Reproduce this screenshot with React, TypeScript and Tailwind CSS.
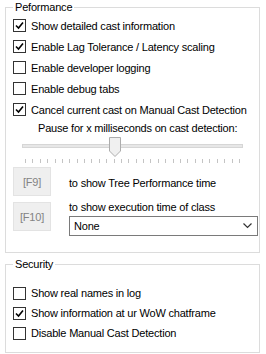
import React from 'react';

const Check = ({ checked }: { checked?: boolean }) => (
  <span className="w-[13px] h-[13px] border border-[#333333] bg-white flex items-center justify-center shrink-0">
    {checked && (
      <svg width="9" height="9" viewBox="0 0 9 9">
        <path d="M1 4.5 L3.5 7 L8 1.5" fill="none" stroke="#000" strokeWidth="1.6" />
      </svg>
    )}
  </span>
);

const Row = ({ label, checked }: { label: string; checked?: boolean }) => (
  <div className="h-[21px] flex items-center gap-[5px] pl-[7px]">
    <Check checked={checked} />
    <span>{label}</span>
  </div>
);

const SecRow = ({ label, checked }: { label: string; checked?: boolean }) => (
  <div className="h-[20px] flex items-center gap-[5px] pl-[7px]">
    <Check checked={checked} />
    <span>{label}</span>
  </div>
);

const KeyButton = ({ label }: { label: string }) => (
  <div className="w-[38px] h-[29px] bg-[#efefef] border border-[#e3e3e3] text-[#838383] flex items-center justify-center">
    {label}
  </div>
);

export default function App() {
  const ticks = Array.from({ length: 30 });
  return (
    <div className="w-[266px] h-[354px] bg-white text-black text-[11px] leading-[14px] tracking-[-0.2px] font-['Liberation_Sans',sans-serif] pt-0 px-[5px] pr-[6px]">
      <fieldset className="border border-[#dcdcdc] h-[253px] px-0">
        <legend className="ml-[7px] px-[2px]">Peformance</legend>
        <div className="pt-[1px]">
          <Row label="Show detailed cast information" checked />
          <Row label="Enable Lag Tolerance / Latency scaling" checked />
          <Row label="Enable developer logging" />
          <Row label="Enable debug tabs" />
          <Row label="Cancel current cast on Manual Cast Detection" checked />
          <div className="h-[16px] flex items-center pl-[32px]">Pause for x milliseconds on cast detection:</div>
          <div className="relative h-[22px] mx-[16px] mt-[1px]">
            <div className="absolute left-0 right-0 top-[7px] h-[4px] bg-[#e7e7e7] border border-[#d6d6d6]" />
            <svg className="absolute left-[87px] top-0" width="12" height="20" viewBox="0 0 12 20">
              <path d="M0.5 0.5 H11.5 V14 L6 19.5 L0.5 14 Z" fill="#f0f0f0" stroke="#adadad" />
            </svg>
          </div>
          <div className="flex justify-between mx-[19px] h-[5px]">
            {ticks.map((_, i) => (
              <div key={i} className="w-[1px] h-[4px] bg-[#c4c4c4]" />
            ))}
          </div>
          <div className="flex pl-[7px] mt-[3px] gap-[18px]">
            <div className="flex flex-col gap-[6px]">
              <KeyButton label="[F9]" />
              <KeyButton label="[F10]" />
            </div>
            <div className="flex flex-col">
              <div className="h-[32px] flex items-center">to show Tree Performance time</div>
              <div className="h-[16px] flex items-center">to show execution time of class</div>
              <div className="mt-[1px] w-[189px] h-[20px] border border-[#7a7a7a] flex items-center justify-between pl-[4px] pr-[5px]">
                <span>None</span>
                <svg width="9" height="6" viewBox="0 0 9 6">
                  <path d="M0.5 0.5 L4.5 4.5 L8.5 0.5" fill="none" stroke="#333" strokeWidth="1.2" />
                </svg>
              </div>
            </div>
          </div>
        </div>
      </fieldset>
      <fieldset className="border border-[#dcdcdc] mt-[4px] h-[96px] px-0">
        <legend className="ml-[7px] px-[2px]">Security</legend>
        <div className="pt-[12px]">
          <SecRow label="Show real names in log" />
          <SecRow label="Show information at ur WoW chatframe" checked />
          <SecRow label="Disable Manual Cast Detection" />
        </div>
      </fieldset>
    </div>
  );
}
